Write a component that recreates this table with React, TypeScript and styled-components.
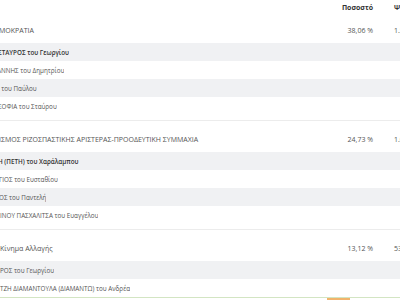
import React from 'react';
import styled, { createGlobalStyle } from 'styled-components';

const GlobalStyle = createGlobalStyle`
  html, body {
    margin: 0;
    padding: 0;
    background: #ffffff;
    overflow: hidden;
  }
  body {
    font-family: 'Open Sans', 'Noto Sans', sans-serif;
    color: #555;
  }
`;

type Candidate = { name: string; cut?: number; lead?: boolean };
type Party = { name: string; cut?: number; pct: string; votes: string; candidates: Candidate[] };

const parties: Party[] = [
  {
    name: 'ΜΟΚΡΑΤΙΑ',
    cut: 1,
    pct: '38,06 %',
    votes: '1.547',
    candidates: [
      { name: 'ΣΤΑΥΡΟΣ του Γεωργίου', cut: 2, lead: true },
      { name: 'ΑΝΝΗΣ του Δημητρίου', cut: 3 },
      { name: 'Σ του Παύλου', cut: 4 },
      { name: 'ΣΟΦΙΑ του Σταύρου', cut: 2 },
    ],
  },
  {
    name: 'ΙΣΜΟΣ ΡΙΖΟΣΠΑΣΤΙΚΗΣ ΑΡΙΣΤΕΡΑΣ-ΠΡΟΟΔΕΥΤΙΚΗ ΣΥΜΜΑΧΙΑ',
    cut: 1,
    pct: '24,73 %',
    votes: '1.005',
    candidates: [
      { name: 'Η (ΠΕΤΗ) του Χαράλαμπου', cut: 2, lead: true },
      { name: 'ΓΙΟΣ του Ευσταθίου', cut: 1 },
      { name: 'ΟΣ του Παντελή', cut: 1 },
      { name: 'ΙΝΟΥ ΠΑΣΧΑΛΙΤΣΑ του Ευαγγέλου', cut: 0 },
    ],
  },
  {
    name: 'Κίνημα Αλλαγής',
    cut: 0,
    pct: '13,12 %',
    votes: '533',
    candidates: [
      { name: 'ΡΟΣ του Γεωργίου', cut: 0 },
      { name: 'ΤΖΗ ΔΙΑΜΑΝΤΟΥΛΑ (ΔΙΑΜΑΝΤΩ) του Ανδρέα', cut: 0 },
    ],
  },
];

export default function App() {
  return (
    <>
      <GlobalStyle />
      <Table>
        <HeaderRow>
          <span />
          <HeadCell>Ποσοστό</HeadCell>
          <HeadCell $left>Ψήφοι</HeadCell>
        </HeaderRow>
        {parties.map((p, i) => (
          <Group key={p.pct} $first={i === 0}>
            <PartyRow $first={i === 0}>
              <Name $cut={p.cut ?? 0}>{p.name}</Name>
              <Num>{p.pct}</Num>
              <Votes>{p.votes}</Votes>
            </PartyRow>
            {p.candidates.map((c, j) => (
              <CandidateRow key={c.name} $shaded={j % 2 === 0}>
                <Name $cut={c.cut ?? 0} $bold={c.lead}>
                  {c.name}
                </Name>
              </CandidateRow>
            ))}
          </Group>
        ))}
        <Bar>
          <BarFill />
        </Bar>
      </Table>
    </>
  );
}

const Table = styled.div`
  width: 420px;
  display: flex;
  flex-direction: column;
`;

const HeaderRow = styled.div`
  display: grid;
  grid-template-columns: 1fr 60px 47px;
  height: 11px;
`;

const HeadCell = styled.div<{ $left?: boolean }>`
  font-size: 7px;
  font-weight: 700;
  color: #333;
  line-height: 11px;
  padding-top: 2px;
  text-align: ${(p) => (p.$left ? 'left' : 'right')};
  padding-left: ${(p) => (p.$left ? '21px' : '0')};
  white-space: nowrap;
`;

const Group = styled.div<{ $first?: boolean }>`
  margin-top: ${(p) => (p.$first ? '0' : '5px')};
`;

const PartyRow = styled.div<{ $first?: boolean }>`
  display: grid;
  grid-template-columns: 1fr 60px 47px;
  height: 32px;
  box-sizing: border-box;
  border-top: 1px solid ${(p) => (p.$first ? 'transparent' : '#ececec')};
  padding-top: 13px;
  font-size: 7px;
  line-height: 12px;
  color: #555;
`;

const Name = styled.div<{ $cut: number; $bold?: boolean }>`
  overflow: hidden;
  white-space: nowrap;
  text-indent: ${(p) => -p.$cut}px;
  font-weight: ${(p) => (p.$bold ? 600 : 400)};
  color: ${(p) => (p.$bold ? '#333' : 'inherit')};
`;

const Num = styled.div`
  text-align: right;
  font-size: 7px;
  white-space: nowrap;
`;

const Votes = styled(Num)`
  text-align: left;
  padding-left: 21px;
`;

const CandidateRow = styled.div<{ $shaded: boolean }>`
  height: 18px;
  display: flex;
  align-items: center;
  background: ${(p) => (p.$shaded ? '#f0f1f3' : '#ffffff')};
  font-size: 6.3px;
  color: #555;
`;

const Bar = styled.div`
  height: 4px;
  border-top: 1px solid #d3e5c3;
  display: flex;
`;

const BarFill = styled.div`
  margin-left: 327px;
  width: 23px;
  height: 3px;
  background: #f1b46c;
`;
